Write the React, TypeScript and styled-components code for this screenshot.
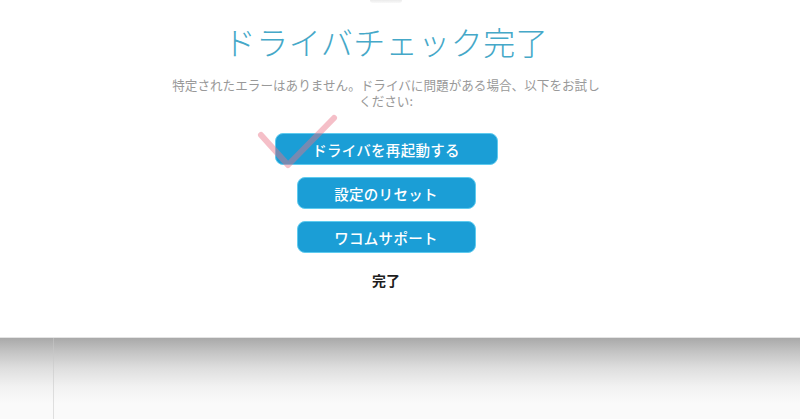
import React from "react";
import styled, { createGlobalStyle } from "styled-components";

const Global = createGlobalStyle`
  html, body { margin: 0; padding: 0; background: #fbfbfb; }
  body { font-family: "Noto Sans CJK JP", "Noto Sans", sans-serif; }
  #root { width: 800px; height: 419px; overflow: hidden; }
`;

const Page = styled.div`
  width: 800px;
  height: 419px;
  display: flex;
  flex-direction: column;
  background: #fbfbfb;
`;

const Modal = styled.div`
  position: relative;
  height: 337px;
  flex: none;
  background: #ffffff;
  display: flex;
  flex-direction: column;
  align-items: center;
  padding-right: 28px;
  box-sizing: border-box;
`;

const TopArc = styled.div`
  width: 32px;
  height: 3px;
  border-radius: 0 0 16px 16px;
  background: linear-gradient(#e2e2e2, #f6f6f6);
  opacity: 0.7;
`;

const Title = styled.h1`
  margin: 19px 0 0;
  font-size: 32px;
  line-height: 38px;
  font-weight: 300;
  color: #45a8c8;
  letter-spacing: 0.5px;
`;

const Message = styled.p`
  margin: 17px 0 0;
  width: 440px;
  font-size: 12.6px;
  line-height: 16px;
  color: #999999;
  text-align: center;
`;

const Actions = styled.div`
  margin-top: 24px;
  display: flex;
  flex-direction: column;
  align-items: center;
  gap: 12px;
`;

const ActionButton = styled.button<{ $wide?: boolean }>`
  width: ${(p) => (p.$wide ? "223px" : "179px")};
  height: 32px;
  border: 1px solid #5fcbef;
  border-radius: 8px;
  background: #1b9ed6;
  color: #ffffff;
  font-family: "Noto Sans CJK JP", "Noto Sans", sans-serif;
  font-size: 14.5px;
  font-weight: 500;
  letter-spacing: 0.3px;
  padding: 0;
  display: flex;
  align-items: center;
  justify-content: center;
`;

const Done = styled.div`
  margin-top: 17px;
  font-size: 14px;
  font-weight: 700;
  color: #1e1e1e;
`;

const Check = styled.svg`
  position: absolute;
  left: 252px;
  top: 110px;
  pointer-events: none;
`;

const Below = styled.div`
  flex: 1;
  display: flex;
  background: linear-gradient(
    #a9a9a9 0px,
    #c4c4c4 14px,
    #dedede 30px,
    #f1f1f1 48px,
    #fafafa 66px
  );
  border-top: 1px solid #e4e4e4;
`;

const SideRail = styled.div`
  width: 53px;
  border-right: 1px solid rgba(200, 200, 200, 0.55);
`;

export default function App() {
  return (
    <>
      <Global />
      <Page>
        <Modal>
          <TopArc />
          <Title>ドライバチェック完了</Title>
          <Message>
            特定されたエラーはありません。ドライバに問題がある場合、以下をお試しください:
          </Message>
          <Actions>
            <ActionButton $wide>ドライバを再起動する</ActionButton>
            <ActionButton>設定のリセット</ActionButton>
            <ActionButton>ワコムサポート</ActionButton>
          </Actions>
          <Done>完了</Done>
          <Check width="90" height="62" viewBox="0 0 90 62">
            <polyline
              points="9,25 36,55 82,8"
              fill="none"
              stroke="rgba(232,112,132,0.45)"
              strokeWidth="6"
              strokeLinecap="round"
              strokeLinejoin="round"
            />
          </Check>
        </Modal>
        <Below>
          <SideRail />
        </Below>
      </Page>
    </>
  );
}
